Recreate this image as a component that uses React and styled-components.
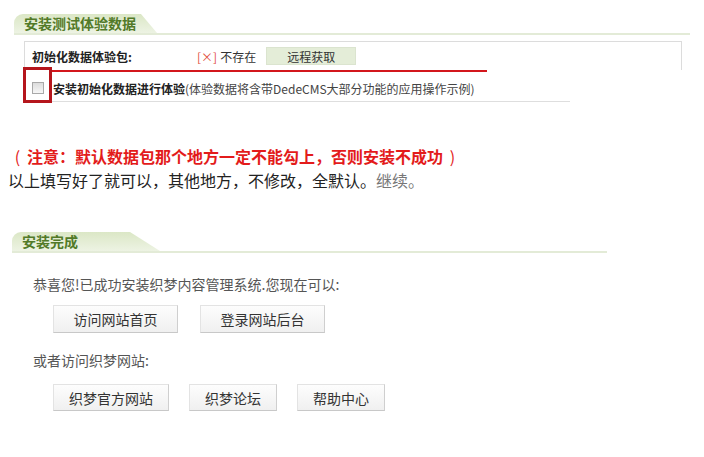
import React from 'react'
import styled, {createGlobalStyle} from 'styled-components'

const GlobalStyle = createGlobalStyle`
body{
  margin:0;
  background:#fff;
  font-family:"Noto Sans CJK SC","Noto Sans",sans-serif;
}
`;

const Page = styled.div`
padding-top:14px;
`;

const Section = styled.div`
padding-left:${props=>props.indent}px;
`;

const TabBar = styled.div`
width:${props=>props.width}px;
border-bottom:2px solid #e3ebd7;
display:flex;
`;

const Tab = styled.div`
width:${props=>props.width}px;
height:19px;
box-sizing:border-box;
padding-left:10px;
line-height:19px;
font-size:14px;
font-weight:700;
color:#527a28;
border-top-left-radius:9px;
background:linear-gradient(to bottom,#dbe7c6,#edf3e3);
clip-path:polygon(0 0,${props=>props.width - props.slope}px 0,100% 100%,0 100%);
`;

const DataBox = styled.div`
margin:6px 0 0 10px;
width:658px;
font-size:12px;
color:#333;
`;

const PackRow = styled.div`
height:29px;
box-sizing:border-box;
border:1px solid #dcdcdc;
border-bottom:none;
display:flex;
align-items:center;
padding-left:7px;
`;

const PackLabel = styled.span`
width:165px;
font-weight:700;
color:#222;
`;

const Missing = styled.span`
color:#e2503f;
margin-right:3px;
`;

const FetchButton = styled.button`
margin-left:10px;
width:90px;
height:18px;
padding:0;
border:1px solid #dbe4cf;
background:#e4edd8;
font-family:inherit;
font-size:12px;
color:#333;
`;

const RedRule = styled.div`
margin-left:26px;
width:437px;
height:2px;
background:#d3161c;
`;

const TrialRow = styled.div`
position:relative;
width:546px;
height:30px;
box-sizing:border-box;
border-bottom:1px solid #dedede;
display:flex;
align-items:center;
padding:3px 0 0 8px;
`;

const CheckBox = styled.input`
appearance:none;
margin:0 9px 0 0;
width:12px;
height:12px;
border:1px solid #a9a9a9;
background:linear-gradient(to bottom,#dcdcdc,#f7f7f7);
`;

const TrialTitle = styled.span`
font-weight:700;
color:#222;
`;

const TrialNote = styled.span`
color:#444;
`;

const Highlight = styled.div`
position:absolute;
left:-1px;
top:-5px;
width:29px;
height:36px;
box-sizing:border-box;
border:3px solid #b5161c;
`;

const Notice = styled.div`
margin-top:42px;
padding-left:8px;
font-size:16px;
line-height:24px;
`;

const Warning = styled.div`
color:#e31b1b;
strong{font-weight:700;}
`;

const Paren = styled.span`
display:inline-block;
width:19px;
text-align:center;
`;

const Line = styled.div`
color:#222;
`;

const Muted = styled.span`
color:#777;
`;

const Done = styled(Section)`
margin-top:40px;
`;

const Text = styled.div`
margin:${props=>props.top}px 0 0 21px;
font-size:14px;
line-height:20px;
color:#555;
`;

const ButtonRow = styled.div`
margin:${props=>props.top}px 0 0 41px;
display:flex;
gap:${props=>props.gap}px;
`;

const LinkButton = styled.button`
height:${props=>props.h}px;
${props=>props.w ? `width:${props.w}px;` : 'padding:0 15px;'}
${props=>props.w ? 'padding:0;' : ''}
border:1px solid #e3e3e3;
border-right-color:#cfcfcf;
border-bottom-color:#c8c8c8;
background:linear-gradient(to bottom,#fdfdfd,#f0f0f0);
font-family:inherit;
font-size:14px;
color:#333;
`;

const App = () =>{
  return(
    <Page>
      <GlobalStyle/>
      <Section indent={14}>
        <TabBar width={676}>
          <Tab width={143} slope={16}>安装测试体验数据</Tab>
        </TabBar>
        <DataBox>
          <PackRow>
            <PackLabel>初始化数据体验包:</PackLabel>
            <Missing>[×]</Missing>不存在
            <FetchButton>远程获取</FetchButton>
          </PackRow>
          <RedRule/>
          <TrialRow>
            <CheckBox type="checkbox"/>
            <TrialTitle>安装初始化数据进行体验</TrialTitle>
            <TrialNote>(体验数据将含带DedeCMS大部分功能的应用操作示例)</TrialNote>
            <Highlight/>
          </TrialRow>
        </DataBox>
      </Section>

      <Notice>
        <Warning><Paren>(</Paren><strong>注意：默认数据包那个地方一定不能勾上，否则安装不成功</strong><Paren>)</Paren></Warning>
        <Line>以上填写好了就可以，其他地方，不修改，全默认。<Muted>继续。</Muted></Line>
      </Notice>

      <Done indent={12}>
        <TabBar width={595}>
          <Tab width={148} slope={30}>安装完成</Tab>
        </TabBar>
        <Text top={21}>恭喜您!已成功安装织梦内容管理系统.您现在可以:</Text>
        <ButtonRow top={11} gap={22}>
          <LinkButton w={125} h={28}>访问网站首页</LinkButton>
          <LinkButton w={125} h={28}>登录网站后台</LinkButton>
        </ButtonRow>
        <Text top={17}>或者访问织梦网站:</Text>
        <ButtonRow top={14} gap={20}>
          <LinkButton h={27}>织梦官方网站</LinkButton>
          <LinkButton h={27}>织梦论坛</LinkButton>
          <LinkButton h={27}>帮助中心</LinkButton>
        </ButtonRow>
      </Done>
    </Page>
  )
}

export default App;
